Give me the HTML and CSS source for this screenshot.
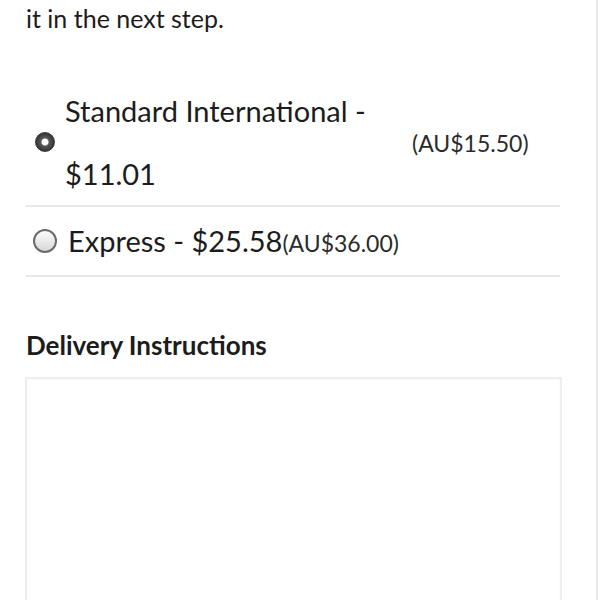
FILE: index.html
```html
<!DOCTYPE html>
<html>
  <head>
    <link rel="stylesheet" href="styles.css">
  </head>

  <body>
    <div class="page">
      <p class="intro">it in the next step.</p>

      <div class="shipping">
        <label class="option option-tall">
          <input type="radio" name="shipping" value="standard" checked />
          <span class="name">Standard International - $11.01</span>
          <span class="aud aud-spaced">(AU$15.50)</span>
        </label>

        <label class="option">
          <input type="radio" name="shipping" value="express" />
          <span class="name">Express - $25.58</span>
          <span class="aud">(AU$36.00)</span>
        </label>
      </div>

      <h2 class="section-title">Delivery Instructions</h2>
      <textarea class="notes" id="notes"></textarea>
    </div>
  </body>
</html>
```

FILE: styles.css
```css
html,
body {
  margin: 0;
  background-color: #fff;
}

body {
  font-family: Lato, "Open Sans", sans-serif;
  color: #1c1c1c;
  overflow: hidden;
  height: 600px;
}

.page {
  width: 598px;
  height: 600px;
  box-sizing: border-box;
  padding: 0 36px 0 26px;
  border-right: 2px solid #e9e9e9;
  overflow: hidden;
}

.intro {
  margin: 0;
  padding-top: 3px;
  font-size: 25px;
  line-height: 30px;
}

.shipping {
  margin-top: 46px;
}

.option {
  display: flex;
  align-items: center;
  border-bottom: 2px solid #e8e8e8;
  padding-left: 7px;
  line-height: 68px;
  font-size: 29px;
}

.option-tall {
  line-height: 63px;
  padding-left: 9px;
}

.option-tall .name {
  width: 347px;
  flex-shrink: 0;
}

.aud {
  font-size: 23px;
  color: #2b2b2b;
  line-height: 28px;
  margin-top: 4px;
}

.aud-spaced {
  margin-top: 1px;
}

/* radio buttons, old android look */
.option input[type="radio"] {
  appearance: none;
  -webkit-appearance: none;
  margin: 0 11px 0 0;
  width: 24px;
  height: 24px;
  border-radius: 50%;
  border: 2px solid #6b6b6b;
  box-sizing: border-box;
  background: linear-gradient(#fdfdfd, #d8d8d8);
  flex-shrink: 0;
}

.option input[type="radio"]:checked {
  width: 20px;
  height: 20px;
  margin-right: 10px;
  border: 1px solid #3a3a3a;
  background: radial-gradient(circle, #fff 0, #fff 3px, #5a5a5a 4px, #444 7px, #2e2e2e 10px);
}

.section-title {
  margin: 53px 0 0;
  font-size: 26px;
  font-weight: bold;
  line-height: 30px;
}

.notes {
  display: block;
  width: 537px;
  height: 400px;
  margin: 17px 0 0 -1px;
  box-sizing: border-box;
  border: 2px solid #eeeeee;
  box-shadow: inset 0 0 2px #f2f2f2;
  border-radius: 0;
  resize: none;
  outline: none;
}
```
